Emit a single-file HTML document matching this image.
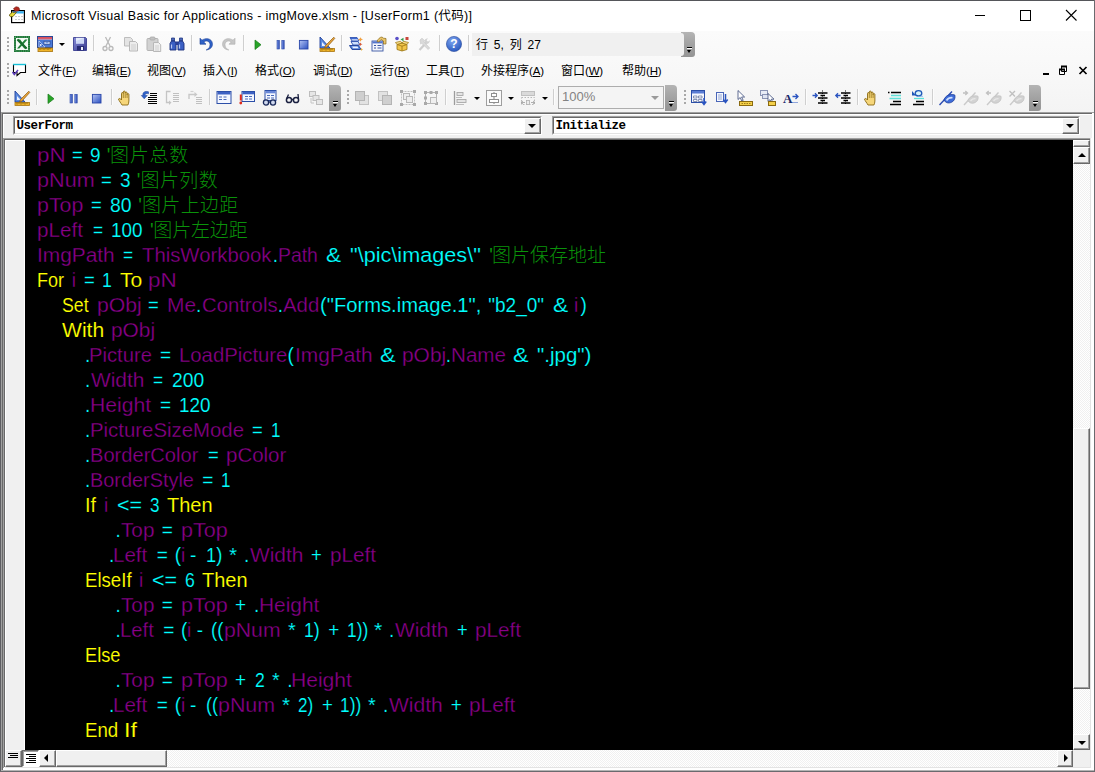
<!DOCTYPE html>
<html lang="zh-CN">
<head>
<meta charset="utf-8">
<title>Microsoft Visual Basic for Applications - imgMove.xlsm - [UserForm1 (代码)]</title>
<style>
*{box-sizing:border-box;margin:0;padding:0}
html,body{width:1095px;height:772px;overflow:hidden;background:#fff}
body{position:relative;font-family:"Liberation Sans","Noto Sans CJK SC",sans-serif;font-size:12px;color:#000}
.abs{position:absolute}
#win{position:absolute;left:0;top:0;width:1095px;height:772px;background:#fff;overflow:hidden}
/* window frame */
#bL{left:0;top:0;width:1px;height:772px;background:#5f5f63}
#bT{left:0;top:0;width:1095px;height:1px;background:#55565a}
#bR{left:1094px;top:0;width:1px;height:772px;background:#6a6a6e}
#bB{left:0;top:771px;width:1095px;height:1px;background:#6a6a6e}
/* title */
#title{left:31px;top:8px;height:16px;line-height:16px;font-size:12.5px;letter-spacing:0.31px;white-space:nowrap;color:#000}
/* toolbars */
#tbbg{left:1px;top:31px;width:1093px;height:81px;background:linear-gradient(#fbfbfb,#f8f8f8 50%,#f4f4f4)}
.sep{position:absolute;width:1px;height:16px;background:#cfcfcf;box-shadow:1px 0 0 #fcfcfc}
.grip{position:absolute;width:3px;height:16px;background-image:radial-gradient(circle at 1px 1px,#a8a8a8 0.9px,rgba(255,255,255,0) 1.2px);background-size:3px 4px}
.cap{position:absolute;width:12px;background:linear-gradient(#b4b4b4,#a2a2a2 50%,#949494);border-radius:0 4px 3px 0}
.cap i{position:absolute;left:4px;width:5px;height:1px;background:#000;box-shadow:0 1px 0 #fff}
.cap b{position:absolute;left:4px;width:0;height:0;border-left:2.5px solid transparent;border-right:2.5px solid transparent;border-top:3px solid #000}
.ic{position:absolute;width:16px;height:16px}
.ic svg{overflow:visible;display:block}
.dd{position:absolute;width:0;height:0;border-left:3px solid transparent;border-right:3px solid transparent;border-top:3px solid #000}
.menu{position:absolute;top:63px;height:16px;line-height:16px;font-size:12px;white-space:nowrap}
.menu .ml{font-size:11.5px;letter-spacing:-0.2px}
.menu u{text-decoration:underline;text-underline-offset:1px}
#status{left:472px;top:33px;width:212px;height:23px;background:#f0f0f0;border-radius:0 3px 3px 0;z-index:2}
#status span{position:absolute;left:4px;top:4px;height:16px;line-height:16px;font-size:12px;white-space:nowrap;word-spacing:2.5px}
#zoom{left:558px;top:86px;width:106px;height:23px;border:1px solid #adadad;background:#f4f4f4}
#zoom span{position:absolute;left:3px;top:2px;font-size:13px;line-height:16px;color:#838383}
#zoom b{position:absolute;right:4px;top:9px;width:0;height:0;border-left:4px solid transparent;border-right:4px solid transparent;border-top:4px solid #9a9a9a}
/* MDI child */
#mdiT1{left:1px;top:112px;width:1093px;height:1px;background:#a0a0a0}
#mdiT2{left:2px;top:113px;width:1091px;height:1px;background:#696969}
#mdiL1{left:1px;top:112px;width:1px;height:659px;background:#a0a0a0}
#mdiL2{left:2px;top:113px;width:1px;height:657px;background:#696969}
#panel{left:3px;top:114px;width:1090px;height:24px;background:#f0f0f0;border-top:1px solid #fff;border-left:1px solid #fff}
.combo{position:absolute;top:116px;height:19px;background:#fff;border:1px solid;border-color:#a0a0a0 #fff #fff #a0a0a0}
.combo:before{content:"";position:absolute;left:0;top:0;right:0;bottom:0;border:1px solid;border-color:#696969 #e3e3e3 #e3e3e3 #696969}
.combo span{position:absolute;left:2.5px;top:2px;font-family:"Liberation Mono","Noto Sans CJK SC",monospace;font-weight:bold;font-size:12.5px;letter-spacing:-0.5px;line-height:14px;white-space:nowrap;color:#000}
.cbtn{position:absolute;right:0px;top:1px;width:17px;height:16px;background:#f0f0f0;border:1px solid;border-color:#fff #696969 #696969 #fff;box-shadow:inset -1px -1px 0 #a0a0a0}
.cbtn:after{content:"";position:absolute;left:3px;top:5px;width:0;height:0;border-left:4px solid transparent;border-right:4px solid transparent;border-top:4px solid #000}
#codeT1{left:3px;top:138px;width:1088px;height:1px;background:#a0a0a0}
#codeT2{left:4px;top:139px;width:1087px;height:1px;background:#696969}
#codeL1{left:3px;top:138px;width:1px;height:630px;background:#a0a0a0}
#codeL2{left:4px;top:139px;width:1px;height:628px;background:#696969}
#margin{left:5px;top:140px;width:20px;height:610px;background:#f0f0f0;border:1px solid #fff;border-bottom:0}
#code{left:25px;top:140px;width:1048px;height:610px;background:#000;overflow:hidden}
.t{position:absolute;white-space:pre;transform-origin:0 0;font-size:19px;line-height:25px;height:25px;font-family:"Liberation Sans","Noto Sans CJK SC",sans-serif}
.t{-webkit-text-stroke:0.25px #000}
.k{color:#ffff00;-webkit-text-stroke-width:0.12px}.i{color:#8a008a}.n{color:#00ffff;-webkit-text-stroke-width:0.15px}.c{color:#0a920a;font-weight:300;-webkit-text-stroke:0}
/* scrollbars */
.track{position:absolute;background-color:#fff;background-image:conic-gradient(#f0f0f0 25%,#fff 0 50%,#f0f0f0 0 75%,#fff 0);background-size:2px 2px}
.btn3d{position:absolute;background:#f0f0f0;border:1px solid;border-color:#fff #696969 #696969 #fff;box-shadow:inset -1px -1px 0 #a0a0a0,inset 1px 1px 0 #f0f0f0}
.arrU:after,.arrD:after,.arrL:after,.arrR:after{content:"";position:absolute;width:0;height:0}
.arrU:after{left:4px;top:5px;border-left:4px solid transparent;border-right:4px solid transparent;border-bottom:4px solid #000}
.arrD:after{left:4px;top:6px;border-left:4px solid transparent;border-right:4px solid transparent;border-top:4px solid #000}
.arrL:after{left:4px;top:3px;border-top:4px solid transparent;border-bottom:4px solid transparent;border-right:4px solid #000}
.arrR:after{left:6px;top:3px;border-top:4px solid transparent;border-bottom:4px solid transparent;border-left:4px solid #000}
</style>
</head>
<body>
<div id="win">
<div class="ic" style="left:10px;top:7px"><svg width="16" height="16" viewBox="0 0 16 16"><rect x="1.600" y="3.600" width="12.800" height="12" fill="#fff" stroke="#000" stroke-width="1.200"/><rect x="2.200" y="4.200" width="11.600" height="2.300" fill="#38b0f0"/><path d="M5.500 9.500h1M8.500 9.500h1M11.500 9.500h1M5.500 12.500h1M8.500 12.500h1M11.500 12.500h1" stroke="#9a9a9a" stroke-width="1"/><path d="M3.500 1.500L6 -.3 8.500.2l1.200 2L8.500 4 5 4.200z" fill="#b02a20" stroke="#6a140c" stroke-width=".5"/><path d="M-.8 8l3.500-3.200 3.800.4L3 9.500.5 9.800z" fill="#e4d838" stroke="#5a5008" stroke-width=".8"/><path d="M3 5.500l2.500-1" stroke="#3a4a9a" stroke-width="1.100"/></svg></div>
<div id="title" class="abs">Microsoft Visual Basic for Applications - imgMove.xlsm - [UserForm1 (代码)]</div>
<svg class="abs" style="left:957px;top:1px" width="137" height="30" viewBox="0 0 137 30"><path d="M18 14.500h10" stroke="#000" stroke-width="1"/><rect x="63.500" y="9.500" width="10" height="10" fill="none" stroke="#000" stroke-width="1"/><path d="M109 9l10.500 10.500M119.500 9L109 19.500" stroke="#000" stroke-width="1.100"/></svg>
<div id="tbbg" class="abs"></div>
<div class="grip" style="left:7px;top:37px"></div>
<div class="ic" style="left:14px;top:36px"><svg width="16" height="16" viewBox="0 0 16 16"><rect x="1" y="1" width="14" height="14" fill="#f4faf5" stroke="#1c7435" stroke-width="2"/><rect x="1" y="1" width="14" height="14" fill="none" stroke="#8fd0a0" stroke-width=".7" stroke-dasharray="1 1.2"/><path d="M3 3.500h3.200L8.300 6.500 11 3.500h2.500L9.600 8l3.900 4.500h-3.200L8 9.500l-2.700 3H3l3.800-4.500z" fill="#1f8038"/><path d="M3.500 3.500l9 9" stroke="#176a2c" stroke-width="2.200"/></svg></div>
<div class="ic" style="left:37px;top:36px"><svg width="16" height="16" viewBox="0 0 16 16"><rect x="0.500" y="0.500" width="15" height="11" fill="#4a7ad8" stroke="#2c4a98"/><rect x="1" y="1" width="14" height="2.300" fill="#d8505e"/><path d="M1 3.300h14" stroke="#f2b8be" stroke-width=".6"/><path d="M2 11V5l6 6z" fill="#2a58c0" stroke="#cfdcf8" stroke-width=".7"/><circle cx="3.800" cy="9" r=".9" fill="#fff"/><rect x="7" y="5.300" width="6" height="3" fill="#dfe9fc" stroke="#2c4a98" stroke-width=".8"/><rect x="8.500" y="6.300" width="3" height="1" fill="#4a7ad8"/><rect x="1" y="12" width="14.500" height="3.600" fill="#f0b428" stroke="#a87410" stroke-width=".8"/><path d="M3 12v2M5 12v1.400M7 12v2M9 12v1.400M11 12v2M13 12v1.400" stroke="#6a4800" stroke-width=".7"/></svg></div>
<div class="ic" style="left:72px;top:36px"><svg width="16" height="16" viewBox="0 0 16 16"><defs><linearGradient id="svg1" x1="0" y1="0" x2="1" y2="1"><stop offset="0" stop-color="#8a8ed8"/><stop offset="1" stop-color="#34388e"/></linearGradient></defs><path d="M1.500 1.500h12l1 1v12h-13z" fill="url(#svg1)" stroke="#3a3e92" stroke-width=".9"/><rect x="4" y="1.800" width="8" height="5.700" fill="#e6ecfb"/><path d="M4 5l8-3v5.500H4z" fill="#cdd8f6"/><rect x="5" y="10" width="7" height="4.500" fill="#262a72"/><rect x="9" y="11" width="2" height="3" fill="#eef0fb"/></svg></div>
<div class="ic" style="left:100px;top:36px"><svg width="16" height="16" viewBox="0 0 16 16"><path d="M5.500 1L10 10M10.500 1L6 10" stroke="#b9b9b9" stroke-width="1.300" fill="none"/><circle cx="5" cy="12.500" r="2" fill="none" stroke="#b9b9b9" stroke-width="1.300"/><circle cx="11" cy="12.500" r="2" fill="none" stroke="#b9b9b9" stroke-width="1.300"/></svg></div>
<div class="ic" style="left:123px;top:36px"><svg width="16" height="16" viewBox="0 0 16 16"><path d="M1.5 1.5h6l2 2V10h-8z" fill="#e4e4e4" stroke="#bdbdbd"/><path d="M6.5 5.5h6l2 2V15h-8z" fill="#ececec" stroke="#b8b8b8"/><path d="M8 9h5M8 11h5M8 13h5" stroke="#c8c8c8" stroke-width=".8"/></svg></div>
<div class="ic" style="left:146px;top:36px"><svg width="16" height="16" viewBox="0 0 16 16"><rect x="1" y="2.5" width="11" height="12" rx="1" fill="#d2d2d2" stroke="#b4b4b4"/><rect x="4" y="1" width="5" height="3" rx="1" fill="#c2c2c2" stroke="#ababab" stroke-width=".8"/><path d="M7.5 6.5h5l2.2 2.2V15.5H7.5z" fill="#efefef" stroke="#b8b8b8"/><path d="M9 10h4M9 12h4M9 14h4" stroke="#c8c8c8" stroke-width=".8"/></svg></div>
<div class="ic" style="left:169px;top:36px"><svg width="16" height="16" viewBox="0 0 16 16"><path d="M2.5 2h3v3h-3zM10.5 2h3v3h-3z" fill="#4a66b8" stroke="#233a84" stroke-width=".8"/><path d="M1 7.5L2.5 5h3.2L7 7.5V14H1zM9 7.5L10.3 5h3.2L15 7.5V14H9z" fill="#3b5fc4" stroke="#1c2f7c" stroke-width=".9"/><rect x="6.6" y="5.5" width="2.8" height="3.5" fill="#2a3f98"/><path d="M2.5 8.5v4M10.5 8.5v4" stroke="#b9c9f4" stroke-width="1.2"/></svg></div>
<div class="ic" style="left:198px;top:36px"><svg width="16" height="16" viewBox="0 0 16 16"><path d="M2 2.2v6h6L5.8 6C8 4 11.8 5 12 8.5c.1 2.4-1.2 4.3-3.8 5.5 4.6-.6 6.6-3.4 6.2-6.6C13.9 2.600 8 1.300 4 4.200z" fill="#2f62c8" stroke="#1a3d94" stroke-width=".6"/></svg></div>
<div class="ic" style="left:221px;top:36px"><svg width="16" height="16" viewBox="0 0 16 16"><path d="M14 2.2v6H8L10.2 6C8 4 4.200 5 4 8.500c-.1 2.400 1.200 4.300 3.800 5.500-4.600-.6-6.600-3.400-6.200-6.600C2.100 2.600 8 1.300 12 4.200z" fill="#c6c6c6" stroke="#aeaeae" stroke-width=".6"/></svg></div>
<div class="ic" style="left:250px;top:36px"><svg width="16" height="16" viewBox="0 0 16 16"><path d="M5 4v9.500l6-4.750z" fill="#28a428" stroke="#177a17" stroke-width=".7"/></svg></div>
<div class="ic" style="left:273px;top:36px"><svg width="16" height="16" viewBox="0 0 16 16"><defs><linearGradient id="pg" x1="0" y1="0" x2="1" y2="0"><stop offset="0" stop-color="#7f9be8"/><stop offset="1" stop-color="#2a48b0"/></linearGradient></defs><rect x="4" y="4.300" width="2.400" height="8.700" fill="url(#pg)" stroke="#2a48a8" stroke-width=".6"/><rect x="8.800" y="4.300" width="2.400" height="8.700" fill="url(#pg)" stroke="#2a48a8" stroke-width=".6"/></svg></div>
<div class="ic" style="left:296px;top:36px"><svg width="16" height="16" viewBox="0 0 16 16"><defs><linearGradient id="sg" x1="0" y1="0" x2="1" y2="1"><stop offset="0" stop-color="#b4c4f4"/><stop offset="1" stop-color="#2a4fc0"/></linearGradient></defs><rect x="3.400" y="4.400" width="8.600" height="8.600" fill="url(#sg)" stroke="#2846a8" stroke-width=".9"/></svg></div>
<div class="ic" style="left:319px;top:36px"><svg width="16" height="16" viewBox="0 0 16 16"><path d="M1 1v11h10z" fill="#5b8be0" stroke="#1f3f9a" stroke-width=".9"/><path d="M3 6v4h3.800z" fill="#e9f0ff"/><path d="M14.800 1.200l1 1.200L8 11l-2.400 1 .8-2.400z" fill="#e8a33a" stroke="#8a5a12" stroke-width=".7"/><rect x="1" y="12.500" width="14.500" height="3" fill="#f0b429" stroke="#a87410" stroke-width=".8"/><path d="M3 12.500v2M5 12.500v1.400M7 12.500v2M9 12.500v1.400M11 12.500v2M13 12.500v1.400" stroke="#6a4800" stroke-width=".7"/></svg></div>
<div class="ic" style="left:348px;top:36px"><svg width="16" height="16" viewBox="0 0 16 16"><path d="M2 1.500h7l2 3.500H4z" fill="#dfe9fc" stroke="#2c50b0" stroke-width=".9"/><path d="M2.300 1.900h6.500l.8 1.300H3z" fill="#3d68d0"/><path d="M3 5.500h7l2 3.500H5z" fill="#cfe0fb" stroke="#2c50b0" stroke-width=".9"/><path d="M1.500 9.500h9l2.500 4H4z" fill="#4f80dc" stroke="#1d3d94" stroke-width=".9"/><path d="M4 10.500h5.500l1 1.800H5z" fill="#eef3ff"/><path d="M12.500 1.200l.9 1.600 1.700.6-1.700.7-.9 1.600-.9-1.600-1.700-.7 1.700-.6z" fill="#f2a040"/><path d="M12.500 6.500l.7 1.200 1.300.5-1.300.5-.7 1.300-.7-1.300-1.300-.5 1.300-.5z" fill="#d85a3a"/><path d="M13.500 12l.6 1 1.100.4-1.100.4-.6 1.100-.6-1.100-1.100-.4 1.100-.4z" fill="#e8b040"/></svg></div>
<div class="ic" style="left:371px;top:36px"><svg width="16" height="16" viewBox="0 0 16 16"><rect x="1" y="5" width="11" height="10" fill="#f4f6fb" stroke="#3a57a4" stroke-width=".9"/><rect x="1.400" y="5.400" width="10.200" height="2" fill="#5576cc"/><path d="M3 9.500h2M6.500 9.500h4M3 12h2M6.500 12h4" stroke="#3a57a4" stroke-width="1"/><path d="M6 5.500c1-2.500 3-4.500 5-4.500l1.500 1.200 2.500.3v5.500h-2.500V5L10 3.500 8 6z" fill="#e9c46a" stroke="#8a6a1a" stroke-width=".7"/></svg></div>
<div class="ic" style="left:394px;top:36px"><svg width="16" height="16" viewBox="0 0 16 16"><path d="M3 8.500l5-1.500 5 1.500v5l-5 1.500-5-1.500z" fill="#f2c64a" stroke="#9a7410" stroke-width=".8"/><path d="M3 8.500l5 1.700 5-1.700M8 10.200V15" stroke="#9a7410" stroke-width=".8" fill="none"/><path d="M3 8.500L1.500 6.500l5-1.300L8 7zM13 8.500l1.500-2-5-1.300L8 7z" fill="#f7dc86" stroke="#9a7410" stroke-width=".7"/><circle cx="3" cy="2.500" r="1.800" fill="#5a4fc8"/><path d="M6.500 3.500l3-1.800v3.600z" fill="#2f9a4a"/><rect x="11.500" y="1" width="3" height="3" fill="#c8453a"/></svg></div>
<div class="ic" style="left:417px;top:36px"><svg width="16" height="16" viewBox="0 0 16 16"><path d="M2.500 14L9 7" stroke="#cdcdcd" stroke-width="2.200"/><path d="M8 7.500C6.500 5.500 8 2.300 11 2.300L9.600 4.200l1.400 1.500 1.900-1.400c0 3-2.900 4.400-4.900 3.200z" fill="#d2d2d2"/><path d="M3 4l2-1.800 2.500 2.300-.8 1 6 6.500-1.500 1.500L4.700 7.300l-1 .8z" fill="#dadada" stroke="#c6c6c6" stroke-width=".6"/></svg></div>
<div class="ic" style="left:446px;top:36px"><svg width="16" height="16" viewBox="0 0 16 16"><defs><radialGradient id="hg" cx=".4" cy=".3" r=".8"><stop offset="0" stop-color="#7ea6f0"/><stop offset="1" stop-color="#1f4fb8"/></radialGradient></defs><circle cx="8" cy="8" r="7.600" fill="url(#hg)" stroke="#2a4a9a" stroke-width=".6"/><text x="8" y="12.300" font-family="Liberation Sans,sans-serif" font-weight="bold" font-size="12" fill="#fff" text-anchor="middle">?</text></svg></div>
<div class="dd" style="left:59px;top:43px"></div>
<div class="sep" style="left:93px;top:35px"></div>
<div class="sep" style="left:191px;top:35px"></div>
<div class="sep" style="left:243px;top:35px"></div>
<div class="sep" style="left:341px;top:35px"></div>
<div class="sep" style="left:439px;top:35px"></div>
<div class="sep" style="left:468px;top:35px"></div>
<div id="status" class="abs"><span>行 5, 列 27</span></div>
<div class="cap" style="left:681px;top:32px;height:25px;width:14px"><i style="top:15px;left:6px"></i><b style="top:18px;left:6px"></b></div>
<div class="grip" style="left:7px;top:63px"></div>
<div class="ic" style="left:12px;top:63px"><svg width="16" height="16" viewBox="0 0 16 16"><path d="M1.500 1.500h12v8h-5L5 12.500V9.500H1.500z" fill="#fff" stroke="#000" stroke-width="1.100"/><path d="M1 1.500h13" stroke="#19c0d8" stroke-width="1.400"/><path d="M.5 9l1.800 2.500L6 7" fill="none" stroke="#5a3ab8" stroke-width="1.500"/></svg></div>
<div class="menu" style="left:38px">文件<span class="ml">(<u>F</u>)</span></div>
<div class="menu" style="left:92px">编辑<span class="ml">(<u>E</u>)</span></div>
<div class="menu" style="left:147px">视图<span class="ml">(<u>V</u>)</span></div>
<div class="menu" style="left:203px">插入<span class="ml">(<u>I</u>)</span></div>
<div class="menu" style="left:255px">格式<span class="ml">(<u>O</u>)</span></div>
<div class="menu" style="left:313px">调试<span class="ml">(<u>D</u>)</span></div>
<div class="menu" style="left:370px">运行<span class="ml">(<u>R</u>)</span></div>
<div class="menu" style="left:426px">工具<span class="ml">(<u>T</u>)</span></div>
<div class="menu" style="left:481px">外接程序<span class="ml">(<u>A</u>)</span></div>
<div class="menu" style="left:561px">窗口<span class="ml">(<u>W</u>)</span></div>
<div class="menu" style="left:622px">帮助<span class="ml">(<u>H</u>)</span></div>
<svg class="abs" style="left:1038px;top:62px" width="54" height="16" viewBox="0 0 54 16"><path d="M5 12h6" stroke="#000" stroke-width="2"/><path d="M23.500 4.500h5v5h-5zM21.500 7.500h5v5h-5z" fill="#fff" stroke="#000" stroke-width="1"/><path d="M23 4.500h6M21 7.500h6" stroke="#000" stroke-width="2"/><path d="M41.500 5l7 7M48.500 5l-7 7" stroke="#000" stroke-width="1.700"/></svg>
<div class="grip" style="left:7px;top:90px"></div>
<div class="ic" style="left:14px;top:90px"><svg width="16" height="16" viewBox="0 0 16 16"><path d="M1 1v11h10z" fill="#5b8be0" stroke="#1f3f9a" stroke-width=".9"/><path d="M3 6v4h3.800z" fill="#e9f0ff"/><path d="M14.800 1.200l1 1.200L8 11l-2.400 1 .8-2.400z" fill="#e8a33a" stroke="#8a5a12" stroke-width=".7"/><rect x="1" y="12.500" width="14.500" height="3" fill="#f0b429" stroke="#a87410" stroke-width=".8"/><path d="M3 12.500v2M5 12.500v1.400M7 12.500v2M9 12.500v1.400M11 12.500v2M13 12.500v1.400" stroke="#6a4800" stroke-width=".7"/></svg></div>
<div class="ic" style="left:43px;top:90px"><svg width="16" height="16" viewBox="0 0 16 16"><path d="M5 4v9.500l6-4.750z" fill="#28a428" stroke="#177a17" stroke-width=".7"/></svg></div>
<div class="ic" style="left:66px;top:90px"><svg width="16" height="16" viewBox="0 0 16 16"><defs><linearGradient id="pg" x1="0" y1="0" x2="1" y2="0"><stop offset="0" stop-color="#7f9be8"/><stop offset="1" stop-color="#2a48b0"/></linearGradient></defs><rect x="4" y="4.300" width="2.400" height="8.700" fill="url(#pg)" stroke="#2a48a8" stroke-width=".6"/><rect x="8.800" y="4.300" width="2.400" height="8.700" fill="url(#pg)" stroke="#2a48a8" stroke-width=".6"/></svg></div>
<div class="ic" style="left:89px;top:90px"><svg width="16" height="16" viewBox="0 0 16 16"><defs><linearGradient id="sg" x1="0" y1="0" x2="1" y2="1"><stop offset="0" stop-color="#b4c4f4"/><stop offset="1" stop-color="#2a4fc0"/></linearGradient></defs><rect x="3.400" y="4.400" width="8.600" height="8.600" fill="url(#sg)" stroke="#2846a8" stroke-width=".9"/></svg></div>
<div class="ic" style="left:118px;top:90px"><svg width="16" height="16" viewBox="0 0 16 16"><path d="M4 15c-1-2-3-4-3.500-6 .8-1 2-.5 3 1V3.500c0-1.300 1.800-1.300 1.800 0V2c0-1.300 1.900-1.300 1.900 0v1c0-1.300 1.900-1.300 1.900 0v1.500c0-1.200 1.800-1.200 1.800 0V11c0 1.500-.5 3-1 4z" fill="#f6d67a" stroke="#8a6a14" stroke-width=".9"/><path d="M5.300 3.500V8M7.200 3V8M9.100 4V8" stroke="#8a6a14" stroke-width=".7"/></svg></div>
<div class="ic" style="left:141px;top:90px"><svg width="16" height="16" viewBox="0 0 16 16"><path d="M9 3.500h7M9 5.500h7M7 7.500h9M7 9.500h9M7 11.500h9M7 13.500h9" stroke="#000" stroke-width="1"/><path d="M7.500 1.800C4 .6 1.200 2.400 2 5.500H.3L3.200 8.800 6.300 5.500H4.300C3.900 4 5.300 3 7.500 3.800z" fill="#2f62c8" stroke="#1a3d94" stroke-width=".5"/></svg></div>
<div class="ic" style="left:164px;top:90px"><svg width="16" height="16" viewBox="0 0 16 16"><path d="M9 3.500h6M9 5.500h6M9 7.500h6M9 9.500h6M9 11.500h6" stroke="#c0c0c0" stroke-width="1"/><path d="M6.500 1.500H2.500v11h3" fill="none" stroke="#c4c4c4" stroke-width="1.300"/><path d="M5 10.500l2.500 2-2.500 2.500z" fill="#c4c4c4"/></svg></div>
<div class="ic" style="left:187px;top:90px"><svg width="16" height="16" viewBox="0 0 16 16"><path d="M9 7.500h6M9 9.500h6M9 11.500h6M9 13.500h6" stroke="#c0c0c0" stroke-width="1"/><path d="M2 9V4.500h6" fill="none" stroke="#c8c8c8" stroke-width="1.400"/><path d="M7.500 2l3 2.500-3 2.500z" fill="#c8c8c8"/><path d="M3.500 1.500h3" stroke="#d0d0d0" stroke-width="1.200"/></svg></div>
<div class="ic" style="left:216px;top:90px"><svg width="16" height="16" viewBox="0 0 16 16"><rect x="1" y="1.500" width="14" height="12" fill="#f4f7ff" stroke="#2c4fa8"/><rect x="1.500" y="2" width="13" height="2.500" fill="#3d62c4"/><path d="M3 7h3M7.500 7h3M3 9.500h3M7.500 9.500h3" stroke="#4a6ab8" stroke-width="1.200"/></svg></div>
<div class="ic" style="left:239px;top:90px"><svg width="16" height="16" viewBox="0 0 16 16"><rect x="3" y="1.500" width="12.500" height="10" fill="#f4f7ff" stroke="#2c4fa8"/><rect x="3.500" y="2" width="11.500" height="2.300" fill="#3d62c4"/><path d="M6 6.500h3M10 6.500h3M6 9h3M10 9h3" stroke="#4a6ab8" stroke-width="1.100"/><path d="M1.800 4.500v6" stroke="#e02a1a" stroke-width="2"/><circle cx="1.800" cy="13" r="1.400" fill="#e02a1a"/></svg></div>
<div class="ic" style="left:262px;top:90px"><svg width="16" height="16" viewBox="0 0 16 16"><rect x="3" y="0.500" width="11" height="10" fill="#f4f7ff" stroke="#2c4fa8"/><rect x="3.500" y="1" width="10" height="2.300" fill="#6a88d8"/><path d="M5 5.500h3M9 5.500h3M5 8h3M9 8h3" stroke="#4a6ab8" stroke-width="1.100"/><circle cx="4" cy="12.500" r="2.600" fill="#cfd8ee" stroke="#1a2a5a" stroke-width="1.300"/><circle cx="11" cy="12.500" r="2.600" fill="#cfd8ee" stroke="#1a2a5a" stroke-width="1.300"/><path d="M6.500 12h2" stroke="#1a2a5a" stroke-width="1.300"/></svg></div>
<div class="ic" style="left:285px;top:90px"><svg width="16" height="16" viewBox="0 0 16 16"><circle cx="4" cy="10" r="2.600" fill="none" stroke="#1a2040" stroke-width="1.500"/><circle cx="11" cy="10" r="2.600" fill="none" stroke="#1a2040" stroke-width="1.500"/><path d="M6.500 9.500h2M1.500 9L3.500 4.500M13.500 9l-.5-5" stroke="#1a2040" stroke-width="1.300" fill="none"/></svg></div>
<div class="ic" style="left:308px;top:90px"><svg width="16" height="16" viewBox="0 0 16 16"><rect x="1.500" y="1.500" width="6" height="5" fill="#e6e6e6" stroke="#bdbdbd"/><rect x="5" y="5.500" width="6" height="5" fill="#e6e6e6" stroke="#bdbdbd"/><rect x="8.500" y="9.500" width="6" height="5" fill="#e6e6e6" stroke="#bdbdbd"/><path d="M3 8v5h3" fill="none" stroke="#c4c4c4"/></svg></div>
<div class="ic" style="left:354px;top:90px"><svg width="16" height="16" viewBox="0 0 16 16"><rect x="5.500" y="5.500" width="9" height="9" fill="#e2e2e2" stroke="#c2c2c2"/><rect x="1.500" y="1.500" width="9" height="9" fill="#cfcfcf" stroke="#b4b4b4"/></svg></div>
<div class="ic" style="left:377px;top:90px"><svg width="16" height="16" viewBox="0 0 16 16"><rect x="1.500" y="1.500" width="9" height="9" fill="#e2e2e2" stroke="#c2c2c2"/><rect x="5.500" y="5.500" width="9" height="9" fill="#cfcfcf" stroke="#b4b4b4"/></svg></div>
<div class="ic" style="left:400px;top:90px"><svg width="16" height="16" viewBox="0 0 16 16"><rect x="1.500" y="1.500" width="13" height="13" fill="none" stroke="#c0c0c0" stroke-dasharray="2 1"/><rect x="3.500" y="3.500" width="6" height="6" fill="#ededed" stroke="#b8b8b8"/><rect x="6.500" y="6.500" width="6" height="6" fill="#ededed" stroke="#b8b8b8"/><path d="M0 0h3v3H0zM13 0h3v3h-3zM0 13h3v3H0zM13 13h3v3h-3z" fill="#a9a9a9"/></svg></div>
<div class="ic" style="left:423px;top:90px"><svg width="16" height="16" viewBox="0 0 16 16"><rect x="2.500" y="2.500" width="11" height="11" fill="none" stroke="#b4b4b4"/><path d="M1 1h3v3H1zM12 1h3v3h-3zM1 12h3v3H1zM12 12h3v3h-3zM6.500 1h3v3h-3zM1 6.500h3v3H1z" fill="#a9a9a9"/><rect x="7.500" y="7.500" width="6" height="6" fill="#efefef" stroke="#b8b8b8"/></svg></div>
<div class="ic" style="left:452px;top:90px"><svg width="16" height="16" viewBox="0 0 16 16"><path d="M2.500 1v14" stroke="#9c9c9c" stroke-width="1.300"/><rect x="5" y="2.500" width="6" height="3" fill="#e4e4e4" stroke="#a8a8a8" stroke-width=".9"/><rect x="5" y="9.500" width="9" height="3" fill="#e4e4e4" stroke="#a8a8a8" stroke-width=".9"/><path d="M4 7.500h6M4 14.500h8" stroke="#b0b0b0" stroke-width=".8"/></svg></div>
<div class="ic" style="left:486px;top:90px"><svg width="16" height="16" viewBox="0 0 16 16"><rect x="0.500" y="0.500" width="15" height="15" fill="#fafafa" stroke="#9e9e9e"/><path d="M8 2v12" stroke="#8f8f8f" stroke-width="1.100"/><rect x="5.500" y="3.500" width="5" height="3" fill="#fff" stroke="#8f8f8f"/><rect x="3.500" y="9.500" width="9" height="3" fill="#fff" stroke="#8f8f8f"/></svg></div>
<div class="ic" style="left:520px;top:90px"><svg width="16" height="16" viewBox="0 0 16 16"><rect x="1.500" y="1.500" width="13" height="4" fill="#dadada" stroke="#c0c0c0"/><rect x="1.500" y="7.500" width="13" height="7" fill="none" stroke="#b8b8b8" stroke-dasharray="1.500 1.500"/><path d="M1 12.500h4M15 12.500h-4M3 11l-2 1.500L3 14M13 11l2 1.500-2 1.500" stroke="#a8a8a8" fill="none" stroke-width=".9"/><rect x="6.500" y="10.500" width="3" height="4" fill="#ececec" stroke="#b0b0b0" stroke-width=".8"/></svg></div>
<div class="ic" style="left:691px;top:90px"><svg width="16" height="16" viewBox="0 0 16 16"><rect x="0.500" y="0.500" width="13" height="12" fill="#f4f7ff" stroke="#2c4fa8"/><rect x="1" y="1" width="12" height="2.500" fill="#5a7cd4"/><path d="M2.500 6h3.500v2H2.500zM7.500 6H11v2H7.500zM2.500 9.500h3.500v2H2.500zM7.500 9.500H11v2H7.500z" fill="#fff" stroke="#5a6a98" stroke-width=".7"/><path d="M13 8v5.500M10.800 11.500L13 14.500l2.200-3" stroke="#2a54c0" stroke-width="1.500" fill="none"/></svg></div>
<div class="ic" style="left:714px;top:90px"><svg width="16" height="16" viewBox="0 0 16 16"><rect x="2.500" y="2.500" width="7" height="9" fill="#f4f7ff" stroke="#4a66b8"/><path d="M4 5h4M4 7h4M4 9h4" stroke="#8a9ccc" stroke-width=".9"/><path d="M11.500 4v7.500M9.300 9.500l2.200 3 2.200-3" stroke="#2a54c0" stroke-width="1.500" fill="none"/></svg></div>
<div class="ic" style="left:737px;top:90px"><svg width="16" height="16" viewBox="0 0 16 16"><path d="M1 0.500v9l2.200-2 1.600 3.500 1.400-.6-1.600-3.400h3z" fill="#fff" stroke="#3a4a7a" stroke-width=".8"/><rect x="2.500" y="11.500" width="13" height="4" fill="#f4d04a" stroke="#8a6a10"/><path d="M4.500 13.500h9" stroke="#8a6a10" stroke-width=".8" stroke-dasharray="1.500 1"/></svg></div>
<div class="ic" style="left:760px;top:90px"><svg width="16" height="16" viewBox="0 0 16 16"><rect x="0.500" y="0.500" width="7" height="5" fill="#e8ecf6" stroke="#8a94b4"/><rect x="2.500" y="4.500" width="6" height="4" fill="#dfe4f2" stroke="#8a94b4"/><path d="M8 3.500v8l2-1.800 1.400 3 1.300-.6-1.400-2.900h2.700z" fill="#fff" stroke="#3a4a7a" stroke-width=".8"/><rect x="8.500" y="11.500" width="7" height="4" fill="#f4d04a" stroke="#8a6a10"/></svg></div>
<div class="ic" style="left:783px;top:90px"><svg width="16" height="16" viewBox="0 0 16 16"><text x="0" y="13" font-family="Liberation Serif,serif" font-weight="bold" font-size="13" fill="#1a2a6a">A</text><path d="M9.500 6.500h5M12.500 4l2.500 2.500-2.500 2.500" stroke="#2a54c0" stroke-width="1.300" fill="none"/><path d="M9.500 12.500h6" stroke="#2a54c0" stroke-width="1" stroke-dasharray="1 1"/></svg></div>
<div class="ic" style="left:812px;top:90px"><svg width="16" height="16" viewBox="0 0 16 16"><path d="M6 3h9.500M8.500 5.500h4.500M6 8h9.500M8.500 10.500h4.500M6 13h9.500" stroke="#000" stroke-width="1.400"/><path d="M10.500 0.500v15" stroke="#000" stroke-width="1" stroke-dasharray="1 1.500"/><path d="M0.500 5.500h4.500M3 3.300l2.200 2.200L3 7.700" stroke="#2a54c0" stroke-width="1.300" fill="none"/></svg></div>
<div class="ic" style="left:835px;top:90px"><svg width="16" height="16" viewBox="0 0 16 16"><path d="M6 3h9.500M8.500 5.500h4.500M6 8h9.500M8.500 10.500h4.500M6 13h9.500" stroke="#000" stroke-width="1.400"/><path d="M10.500 0.500v15" stroke="#000" stroke-width="1" stroke-dasharray="1 1.500"/><path d="M5.500 5.500H1M3 3.300L.8 5.500 3 7.700" stroke="#2a54c0" stroke-width="1.300" fill="none"/></svg></div>
<div class="ic" style="left:864px;top:90px"><svg width="16" height="16" viewBox="0 0 16 16"><path d="M4 15c-1-2-3-4-3.500-6 .8-1 2-.5 3 1V3.500c0-1.300 1.800-1.300 1.800 0V2c0-1.300 1.900-1.300 1.900 0v1c0-1.300 1.900-1.300 1.900 0v1.500c0-1.200 1.800-1.200 1.800 0V11c0 1.500-.5 3-1 4z" fill="#f6d67a" stroke="#8a6a14" stroke-width=".9"/><path d="M5.300 3.500V8M7.200 3V8M9.100 4V8" stroke="#8a6a14" stroke-width=".7"/></svg></div>
<div class="ic" style="left:887px;top:90px"><svg width="16" height="16" viewBox="0 0 16 16"><path d="M1 2.500h1.500M4 2.500h10M6 11.500h8M3 14.500h11" stroke="#000" stroke-width="1.300"/><path d="M4 5.500h10M2.500 8.500h11.500" stroke="#5fe0d8" stroke-width="1.300"/></svg></div>
<div class="ic" style="left:910px;top:90px"><svg width="16" height="16" viewBox="0 0 16 16"><path d="M6 11.500h8M3 14.500h11" stroke="#000" stroke-width="1.300"/><path d="M4 8.500h10" stroke="#5fe0d8" stroke-width="1.300"/><ellipse cx="8.500" cy="3.300" rx="3.300" ry="2.700" fill="#d8f4fa" stroke="#1f58b8" stroke-width="1.300"/><path d="M2 1v4.500h4z" fill="#1f58b8"/><path d="M8 6.300h5" stroke="#7ab0e8" stroke-width=".8"/></svg></div>
<div class="ic" style="left:939px;top:90px"><svg width="16" height="16" viewBox="0 0 16 16"><path d="M.5 15L13 1.500" stroke="#2a4ab0" stroke-width="1.400"/><path d="M5 10C6 6 10.500 3.500 15.800 5c.8 3-.4 6-3.300 7.300C9.500 13.600 6.500 13 5 10z" fill="#3f6cd8" stroke="#1d3d9a" stroke-width=".8"/><path d="M7.500 10.500c1.200-1.800 3.800-3 6-2.800" stroke="#cfe0ff" stroke-width="1.600" fill="none"/></svg></div>
<div class="ic" style="left:962px;top:90px"><svg width="16" height="16" viewBox="0 0 16 16"><path d="M2 15L13.500 2.500" stroke="#cacaca" stroke-width="1.400"/><path d="M6 10.500C7 7 11 5 16 6.200c.6 2.800-.5 5.300-3.200 6.500C10 13.800 7.300 13.200 6 10.500z" fill="#d2d2d2" stroke="#c2c2c2" stroke-width=".8"/><path d="M8.500 10.800c1.200-1.500 3.300-2.300 5-2.200" stroke="#e8e8e8" stroke-width="1.400" fill="none"/><path d="M1 3h4.500M3.300 1L5.500 3 3.300 5" stroke="#c0c0c0" stroke-width="1.300" fill="none"/></svg></div>
<div class="ic" style="left:985px;top:90px"><svg width="16" height="16" viewBox="0 0 16 16"><path d="M2 15L13.500 2.500" stroke="#cacaca" stroke-width="1.400"/><path d="M6 10.500C7 7 11 5 16 6.200c.6 2.800-.5 5.300-3.200 6.500C10 13.800 7.300 13.200 6 10.500z" fill="#d2d2d2" stroke="#c2c2c2" stroke-width=".8"/><path d="M8.500 10.800c1.200-1.500 3.300-2.300 5-2.200" stroke="#e8e8e8" stroke-width="1.400" fill="none"/><path d="M6 3H1.500M3.700 1L1.500 3l2.200 2" stroke="#c0c0c0" stroke-width="1.300" fill="none"/></svg></div>
<div class="ic" style="left:1008px;top:90px"><svg width="16" height="16" viewBox="0 0 16 16"><path d="M2 15L13.500 2.500" stroke="#cacaca" stroke-width="1.400"/><path d="M6 10.500C7 7 11 5 16 6.200c.6 2.800-.5 5.300-3.200 6.500C10 13.800 7.300 13.200 6 10.500z" fill="#d2d2d2" stroke="#c2c2c2" stroke-width=".8"/><path d="M8.500 10.800c1.200-1.500 3.300-2.300 5-2.200" stroke="#e8e8e8" stroke-width="1.400" fill="none"/><path d="M1.500 1l5.500 5.500M7 1L1.500 6.500" stroke="#c0c0c0" stroke-width="1.400"/></svg></div>
<div class="sep" style="left:36px;top:89px"></div>
<div class="sep" style="left:111px;top:89px"></div>
<div class="sep" style="left:209px;top:89px"></div>
<div class="sep" style="left:445px;top:89px"></div>
<div class="sep" style="left:553px;top:89px"></div>
<div class="sep" style="left:805px;top:89px"></div>
<div class="sep" style="left:857px;top:89px"></div>
<div class="sep" style="left:932px;top:89px"></div>
<div class="dd" style="left:474px;top:97px"></div>
<div class="dd" style="left:508px;top:97px"></div>
<div class="dd" style="left:542px;top:97px"></div>
<div class="cap" style="left:329px;top:85px;height:26px;width:12px"><i style="top:16px;left:4px"></i><b style="top:19px;left:4px"></b></div>
<div class="grip" style="left:347px;top:90px"></div>
<div id="zoom" class="abs"><span>100%</span><b></b></div>
<div class="cap" style="left:665px;top:85px;height:26px;width:12px"><i style="top:16px;left:4px"></i><b style="top:19px;left:4px"></b></div>
<div class="grip" style="left:684px;top:90px"></div>
<div class="cap" style="left:1029px;top:85px;height:26px;width:12px"><i style="top:16px;left:4px"></i><b style="top:19px;left:4px"></b></div>
<div id="mdiT1" class="abs"></div><div id="mdiT2" class="abs"></div><div id="mdiL1" class="abs"></div><div id="mdiL2" class="abs"></div>
<div id="panel" class="abs"></div>
<div class="combo" style="left:13px;width:529px"><span>UserForm</span><div class="cbtn"></div></div>
<div class="combo" style="left:552px;width:528px"><span>Initialize</span><div class="cbtn"></div></div>
<div id="codeT1" class="abs"></div><div id="codeT2" class="abs"></div><div id="codeL1" class="abs"></div><div id="codeL2" class="abs"></div>
<div id="margin" class="abs"></div>
<div id="code" class="abs">
<span class="t i" style="left:11.5px;top:2px;transform:scale(1.179,1.05)">pN</span><span class="t n" style="left:46.7px;top:2px;transform:scale(0.964,1.05)">=</span><span class="t n" style="left:65.0px;top:2px;transform:scale(1.000,1.05)">9</span><span class="t c" style="left:81.7px;top:2px;transform:scale(1.000,1.05)">'</span><span class="t c" style="left:85.0px;top:3px;letter-spacing:0.77px">图片总数</span>
<span class="t i" style="left:11.6px;top:27px;transform:scale(1.138,1.05)">pNum</span><span class="t n" style="left:76.0px;top:27px;transform:scale(0.973,1.05)">=</span><span class="t n" style="left:95.0px;top:27px;transform:scale(1.000,1.05)">3</span><span class="t c" style="left:111.7px;top:27px;transform:scale(1.000,1.05)">'</span><span class="t c" style="left:115.5px;top:28px;letter-spacing:0.40px">图片列数</span>
<span class="t i" style="left:11.6px;top:52px;transform:scale(1.125,1.05)">pTop</span><span class="t n" style="left:66.0px;top:52px;transform:scale(0.973,1.05)">=</span><span class="t n" style="left:85.0px;top:52px;transform:scale(1.021,1.05)">80</span><span class="t c" style="left:113.3px;top:52px;transform:scale(1.000,1.05)">'</span><span class="t c" style="left:117.0px;top:53px;letter-spacing:0.32px">图片上边距</span>
<span class="t i" style="left:11.6px;top:77px;transform:scale(1.086,1.05)">pLeft</span><span class="t n" style="left:68.3px;top:77px;transform:scale(0.909,1.05)">=</span><span class="t n" style="left:86.3px;top:77px;transform:scale(0.996,1.05)">100</span><span class="t c" style="left:125.0px;top:77px;transform:scale(1.000,1.05)">'</span><span class="t c" style="left:128.3px;top:78px;letter-spacing:-0.15px">图片左边距</span>
<span class="t i" style="left:12.2px;top:102px;transform:scale(1.098,1.05)">ImgPath</span><span class="t n" style="left:98.3px;top:102px;transform:scale(0.909,1.05)">=</span><span class="t i" style="left:116.7px;top:102px;transform:scale(1.069,1.05)">ThisWorkbook</span><span class="t n" style="left:247.8px;top:102px;transform:scale(1.000,1.05)">.</span><span class="t i" style="left:253.3px;top:102px;transform:scale(1.021,1.05)">Path</span><span class="t n" style="left:301.0px;top:102px;transform:scale(1.192,1.05)">&amp;</span><span class="t n" style="left:325.0px;top:102px;transform:scale(1.139,1.05)">"\pic\images\"</span><span class="t c" style="left:464.3px;top:102px;transform:scale(1.000,1.05)">'</span><span class="t c" style="left:467.0px;top:103px">图片保存地址</span>
<span class="t k" style="left:12.4px;top:127px;transform:scale(0.948,1.05)">For</span><span class="t i" style="left:46.7px;top:127px;transform:scale(1.000,1.05)">i</span><span class="t n" style="left:59.3px;top:127px;transform:scale(0.973,1.05)">=</span><span class="t n" style="left:77.4px;top:127px;transform:scale(0.933,1.05)">1</span><span class="t k" style="left:95.0px;top:127px;transform:scale(1.113,1.05)">To</span><span class="t i" style="left:122.8px;top:127px;transform:scale(1.183,1.05)">pN</span>
<span class="t k" style="left:36.7px;top:152px;transform:scale(0.934,1.05)">Set</span><span class="t i" style="left:71.6px;top:152px;transform:scale(1.116,1.05)">pObj</span><span class="t n" style="left:122.7px;top:152px;transform:scale(0.964,1.05)">=</span><span class="t i" style="left:141.6px;top:152px;transform:scale(1.100,1.05)">Me</span><span class="t n" style="left:171.0px;top:152px;transform:scale(1.000,1.05)">.</span><span class="t i" style="left:176.7px;top:152px;transform:scale(1.068,1.05)">Controls</span><span class="t n" style="left:252.7px;top:152px;transform:scale(1.000,1.05)">.</span><span class="t i" style="left:257.7px;top:152px;transform:scale(1.071,1.05)">Add</span><span class="t n" style="left:294.9px;top:152px;transform:scale(1.063,1.05)">("Forms.image.1",</span><span class="t n" style="left:463.3px;top:152px;transform:scale(1.000,1.05)">"b2_0"</span><span class="t n" style="left:527.7px;top:152px;transform:scale(1.200,1.05)">&amp;</span><span class="t i" style="left:549.0px;top:152px;transform:scale(1.000,1.05)">i</span><span class="t n" style="left:555.5px;top:152px;transform:scale(1.000,1.05)">)</span>
<span class="t k" style="left:36.7px;top:177px;transform:scale(1.111,1.05)">With</span><span class="t i" style="left:85.6px;top:177px;transform:scale(1.097,1.05)">pObj</span>
<span class="t n" style="left:60.0px;top:202px;transform:scale(1.000,1.05)">.</span><span class="t i" style="left:64.4px;top:202px;transform:scale(1.063,1.05)">Picture</span><span class="t n" style="left:135.0px;top:202px;transform:scale(1.000,1.05)">=</span><span class="t i" style="left:153.9px;top:202px;transform:scale(1.069,1.05)">LoadPicture</span><span class="t n" style="left:262.5px;top:202px;transform:scale(1.000,1.05)">(</span><span class="t i" style="left:269.6px;top:202px;transform:scale(1.098,1.05)">ImgPath</span><span class="t n" style="left:355.0px;top:202px;transform:scale(1.231,1.05)">&amp;</span><span class="t i" style="left:377.2px;top:202px;transform:scale(1.100,1.05)">pObj</span><span class="t n" style="left:420.7px;top:202px;transform:scale(1.000,1.05)">.</span><span class="t i" style="left:425.6px;top:202px;transform:scale(1.085,1.05)">Name</span><span class="t n" style="left:488.3px;top:202px;transform:scale(1.231,1.05)">&amp;</span><span class="t n" style="left:511.7px;top:202px;transform:scale(1.077,1.05)">".jpg")</span>
<span class="t n" style="left:60.0px;top:227px;transform:scale(1.000,1.05)">.</span><span class="t i" style="left:65.5px;top:227px;transform:scale(1.100,1.05)">Width</span><span class="t n" style="left:128.3px;top:227px;transform:scale(0.909,1.05)">=</span><span class="t n" style="left:146.7px;top:227px;transform:scale(1.015,1.05)">200</span>
<span class="t n" style="left:60.0px;top:252px;transform:scale(1.000,1.05)">.</span><span class="t i" style="left:64.9px;top:252px;transform:scale(1.111,1.05)">Height</span><span class="t n" style="left:135.0px;top:252px;transform:scale(1.000,1.05)">=</span><span class="t n" style="left:154.0px;top:252px;transform:scale(0.996,1.05)">120</span>
<span class="t n" style="left:60.0px;top:277px;transform:scale(1.000,1.05)">.</span><span class="t i" style="left:64.9px;top:277px;transform:scale(1.072,1.05)">PictureSizeMode</span><span class="t n" style="left:226.7px;top:277px;transform:scale(0.964,1.05)">=</span><span class="t n" style="left:245.8px;top:277px;transform:scale(0.900,1.05)">1</span>
<span class="t n" style="left:60.0px;top:302px;transform:scale(1.000,1.05)">.</span><span class="t i" style="left:64.9px;top:302px;transform:scale(1.058,1.05)">BorderColor</span><span class="t n" style="left:182.7px;top:302px;transform:scale(0.964,1.05)">=</span><span class="t i" style="left:200.6px;top:302px;transform:scale(1.078,1.05)">pColor</span>
<span class="t n" style="left:60.0px;top:327px;transform:scale(1.000,1.05)">.</span><span class="t i" style="left:65.0px;top:327px;transform:scale(1.047,1.05)">BorderStyle</span><span class="t n" style="left:177.3px;top:327px;transform:scale(1.000,1.05)">=</span><span class="t n" style="left:196.4px;top:327px;transform:scale(0.900,1.05)">1</span>
<span class="t k" style="left:60.0px;top:352px;transform:scale(1.041,1.05)">If</span><span class="t i" style="left:79.0px;top:352px;transform:scale(1.000,1.05)">i</span><span class="t n" style="left:91.7px;top:352px;transform:scale(1.131,1.05)">&lt;=</span><span class="t n" style="left:125.0px;top:352px;transform:scale(0.900,1.05)">3</span><span class="t k" style="left:141.7px;top:352px;transform:scale(1.053,1.05)">Then</span>
<span class="t n" style="left:90.5px;top:377px;transform:scale(1.000,1.05)">.</span><span class="t i" style="left:95.5px;top:377px;transform:scale(1.091,1.05)">Top</span><span class="t n" style="left:136.7px;top:377px;transform:scale(1.000,1.05)">=</span><span class="t i" style="left:155.6px;top:377px;transform:scale(1.135,1.05)">pTop</span>
<span class="t n" style="left:84.0px;top:402px;transform:scale(1.000,1.05)">.</span><span class="t i" style="left:88.2px;top:402px;transform:scale(1.082,1.05)">Left</span><span class="t n" style="left:131.7px;top:402px;transform:scale(1.000,1.05)">=</span><span class="t n" style="left:149.7px;top:402px;transform:scale(1.000,1.05)">(</span><span class="t i" style="left:156.0px;top:402px;transform:scale(1.000,1.05)">i</span><span class="t n" style="left:165.0px;top:402px;transform:scale(1.000,1.05)">-</span><span class="t n" style="left:180.7px;top:402px;transform:scale(0.964,1.05)">1)</span><span class="t n" style="left:204.0px;top:402px;transform:scale(1.087,1.05)">*</span><span class="t n" style="left:219.0px;top:402px;transform:scale(1.000,1.05)">.</span><span class="t i" style="left:224.5px;top:402px;transform:scale(1.100,1.05)">Width</span><span class="t n" style="left:286.0px;top:402px;transform:scale(0.973,1.05)">+</span><span class="t i" style="left:304.9px;top:402px;transform:scale(1.089,1.05)">pLeft</span>
<span class="t k" style="left:60.0px;top:427px;transform:scale(0.980,1.05)">ElseIf</span><span class="t i" style="left:114.0px;top:427px;transform:scale(1.000,1.05)">i</span><span class="t n" style="left:126.7px;top:427px;transform:scale(1.131,1.05)">&lt;=</span><span class="t n" style="left:160.0px;top:427px;transform:scale(0.930,1.05)">6</span><span class="t k" style="left:176.7px;top:427px;transform:scale(1.053,1.05)">Then</span>
<span class="t n" style="left:90.5px;top:452px;transform:scale(1.000,1.05)">.</span><span class="t i" style="left:95.5px;top:452px;transform:scale(1.091,1.05)">Top</span><span class="t n" style="left:136.7px;top:452px;transform:scale(1.000,1.05)">=</span><span class="t i" style="left:155.6px;top:452px;transform:scale(1.135,1.05)">pTop</span><span class="t n" style="left:210.0px;top:452px;transform:scale(1.000,1.05)">+</span><span class="t n" style="left:229.0px;top:452px;transform:scale(1.000,1.05)">.</span><span class="t i" style="left:233.9px;top:452px;transform:scale(1.098,1.05)">Height</span>
<span class="t n" style="left:90.5px;top:477px;transform:scale(1.000,1.05)">.</span><span class="t i" style="left:94.9px;top:477px;transform:scale(1.066,1.05)">Left</span><span class="t n" style="left:138.3px;top:477px;transform:scale(1.000,1.05)">=</span><span class="t n" style="left:156.0px;top:477px;transform:scale(1.000,1.05)">(</span><span class="t i" style="left:162.0px;top:477px;transform:scale(1.000,1.05)">i</span><span class="t n" style="left:171.7px;top:477px;transform:scale(1.000,1.05)">-</span><span class="t n" style="left:186.3px;top:477px;transform:scale(0.973,1.05)">((</span><span class="t i" style="left:199.4px;top:477px;transform:scale(1.116,1.05)">pNum</span><span class="t n" style="left:263.3px;top:477px;transform:scale(1.050,1.05)">*</span><span class="t n" style="left:279.1px;top:477px;transform:scale(0.931,1.05)">1)</span><span class="t n" style="left:303.3px;top:477px;transform:scale(1.000,1.05)">+</span><span class="t n" style="left:321.6px;top:477px;transform:scale(0.913,1.05)">1))</span><span class="t n" style="left:349.3px;top:477px;transform:scale(1.125,1.05)">*</span><span class="t n" style="left:364.0px;top:477px;transform:scale(1.000,1.05)">.</span><span class="t i" style="left:370.0px;top:477px;transform:scale(1.098,1.05)">Width</span><span class="t n" style="left:431.7px;top:477px;transform:scale(0.964,1.05)">+</span><span class="t i" style="left:449.9px;top:477px;transform:scale(1.089,1.05)">pLeft</span>
<span class="t k" style="left:60.0px;top:502px;transform:scale(0.961,1.05)">Else</span>
<span class="t n" style="left:90.5px;top:527px;transform:scale(1.000,1.05)">.</span><span class="t i" style="left:95.5px;top:527px;transform:scale(1.091,1.05)">Top</span><span class="t n" style="left:136.7px;top:527px;transform:scale(1.000,1.05)">=</span><span class="t i" style="left:155.6px;top:527px;transform:scale(1.135,1.05)">pTop</span><span class="t n" style="left:210.0px;top:527px;transform:scale(1.000,1.05)">+</span><span class="t n" style="left:230.0px;top:527px;transform:scale(0.930,1.05)">2</span><span class="t n" style="left:246.7px;top:527px;transform:scale(1.038,1.05)">*</span><span class="t n" style="left:262.3px;top:527px;transform:scale(1.000,1.05)">.</span><span class="t i" style="left:266.4px;top:527px;transform:scale(1.107,1.05)">Height</span>
<span class="t n" style="left:84.0px;top:552px;transform:scale(1.000,1.05)">.</span><span class="t i" style="left:88.2px;top:552px;transform:scale(1.082,1.05)">Left</span><span class="t n" style="left:131.7px;top:552px;transform:scale(1.000,1.05)">=</span><span class="t n" style="left:149.7px;top:552px;transform:scale(1.000,1.05)">(</span><span class="t i" style="left:156.0px;top:552px;transform:scale(1.000,1.05)">i</span><span class="t n" style="left:165.0px;top:552px;transform:scale(1.000,1.05)">-</span><span class="t n" style="left:180.8px;top:552px;transform:scale(0.941,1.05)">((</span><span class="t i" style="left:193.2px;top:552px;transform:scale(1.126,1.05)">pNum</span><span class="t n" style="left:257.3px;top:552px;transform:scale(1.087,1.05)">*</span><span class="t n" style="left:273.3px;top:552px;transform:scale(0.900,1.05)">2)</span><span class="t n" style="left:296.7px;top:552px;transform:scale(0.982,1.05)">+</span><span class="t n" style="left:315.1px;top:552px;transform:scale(0.913,1.05)">1))</span><span class="t n" style="left:343.3px;top:552px;transform:scale(1.050,1.05)">*</span><span class="t n" style="left:358.0px;top:552px;transform:scale(1.000,1.05)">.</span><span class="t i" style="left:363.5px;top:552px;transform:scale(1.108,1.05)">Width</span><span class="t n" style="left:425.7px;top:552px;transform:scale(1.000,1.05)">+</span><span class="t i" style="left:443.9px;top:552px;transform:scale(1.096,1.05)">pLeft</span>
<span class="t k" style="left:60.0px;top:577px;transform:scale(0.983,1.05)">End</span><span class="t k" style="left:98.8px;top:577px;transform:scale(1.236,1.05)">If</span>

</div>
<div class="track" style="left:1073px;top:140px;width:17px;height:610px"></div>
<div class="btn3d" style="left:1073px;top:140px;width:17px;height:7px"></div>
<div class="btn3d arrU" style="left:1073px;top:147px;width:17px;height:17px"></div>
<div class="btn3d" style="left:1073px;top:428px;width:17px;height:261px"></div>
<div class="btn3d arrD" style="left:1073px;top:734px;width:17px;height:16px"></div>
<div class="track" style="left:5px;top:750px;width:1068px;height:17px"></div>
<div class="btn3d" style="left:5px;top:750px;width:17px;height:17px"><svg class="abs" style="left:2px;top:2px" width="11" height="8" viewBox="0 0 11 8"><path d="M0 .5h10M2 2.500h8M0 4.500h10" stroke="#000" stroke-width="1"/></svg></div>
<div class="btn3d" style="left:22px;top:750px;width:17px;height:17px;border-color:#696969 #fff #fff #696969;box-shadow:inset 1px 1px 0 #a0a0a0;background:#fff"><svg class="abs" style="left:3px;top:3px" width="11" height="10" viewBox="0 0 11 10"><path d="M0 .5h10M3 2.500h7M0 4.500h10M3 6.500h7M0 8.500h10" stroke="#000" stroke-width="1"/></svg></div>
<div class="btn3d arrL" style="left:39px;top:750px;width:17px;height:17px"></div>
<div class="btn3d" style="left:56px;top:750px;width:111px;height:17px"></div>
<div class="btn3d arrR" style="left:1057px;top:750px;width:16px;height:17px"></div>
<div class="abs" style="left:1073px;top:750px;width:17px;height:17px;background:#f0f0f0"></div>
<div class="abs" style="left:1090px;top:138px;width:1px;height:630px;background:#e3e3e3"></div>
<div class="abs" style="left:1091px;top:138px;width:1px;height:630px;background:#fff"></div>
<div class="abs" style="left:5px;top:767px;width:1086px;height:1px;background:#e3e3e3"></div>
<div class="abs" style="left:3px;top:768px;width:1090px;height:2px;background:#fff"></div>
<div class="abs" style="left:1092px;top:113px;width:2px;height:657px;background:#fff"></div>
<div class="abs" style="left:1px;top:770px;width:1093px;height:1px;background:#b4b4b4"></div>
<div id="bL" class="abs"></div><div id="bT" class="abs"></div><div id="bR" class="abs"></div><div id="bB" class="abs"></div>
</div>
</body>
</html>
